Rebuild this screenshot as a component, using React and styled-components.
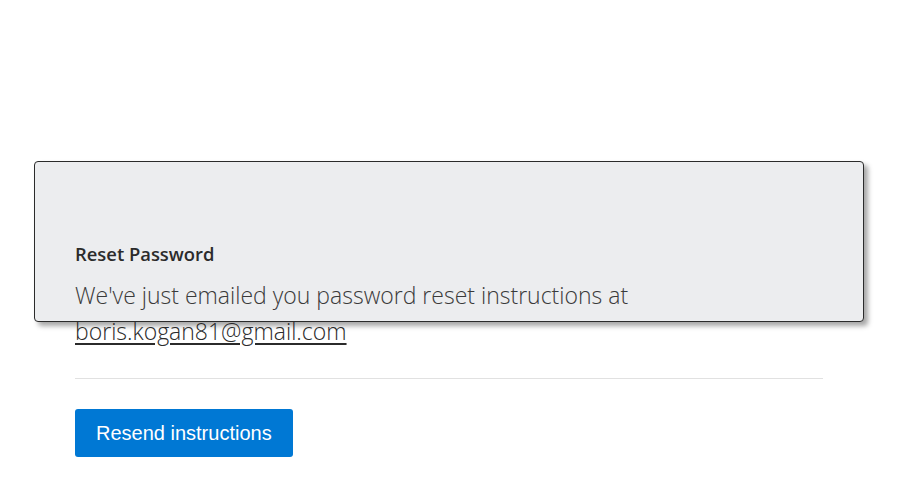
import React from "react";
import styled, { createGlobalStyle } from "styled-components";

const Global = createGlobalStyle`
  html, body { margin: 0; padding: 0; background: #ffffff; }
  body { font-family: "Open Sans", "Noto Sans", sans-serif; }
  * { box-sizing: border-box; }
`;

const Page = styled.div`
  padding: 161px 59px 0 34px;
  width: 923px;
  height: 494px;
  overflow: hidden;
`;

const Card = styled.section`
  width: 830px;
  height: 161px;
  background: #ecedef;
  border: 1px solid #2b2b2b;
  border-radius: 4px;
  box-shadow: 4px 4px 5px rgba(0, 0, 0, 0.35);
  padding: 80px 40px 0;
`;

const Title = styled.h2`
  margin: 0;
  font-family: "Open Sans", sans-serif;
  font-weight: 600;
  font-size: 18.4px;
  line-height: 24px;
  color: #2b2b2b;
`;

const Message = styled.p`
  margin: 11px 0 0;
  font-family: "Open Sans", sans-serif;
  font-weight: 300;
  font-size: 23px;
  line-height: 36px;
  color: #3a3a3a;
  width: 640px;
`;

const EmailLink = styled.a`
  color: #2b2b2b;
  text-decoration: underline;
  text-underline-offset: 3px;
`;

const Divider = styled.hr`
  margin: 29px 0 0;
  border: none;
  border-top: 1px solid #e1e1e1;
  height: 0;
`;

const PrimaryButton = styled.button`
  margin-top: 30px;
  height: 48px;
  padding: 0 21px;
  background: #0078d4;
  color: #ffffff;
  border: none;
  border-radius: 3px;
  font-family: "Liberation Sans", Arial, sans-serif;
  font-size: 20px;
  cursor: pointer;
`;

export default function App() {
  return (
    <>
      <Global />
      <Page>
        <Card>
          <Title>Reset Password</Title>
          <Message>
            We've just emailed you password reset instructions at{" "}
            <EmailLink href="#">boris.kogan81@gmail.com</EmailLink>
          </Message>
          <Divider />
          <PrimaryButton>Resend instructions</PrimaryButton>
        </Card>
      </Page>
    </>
  );
}
